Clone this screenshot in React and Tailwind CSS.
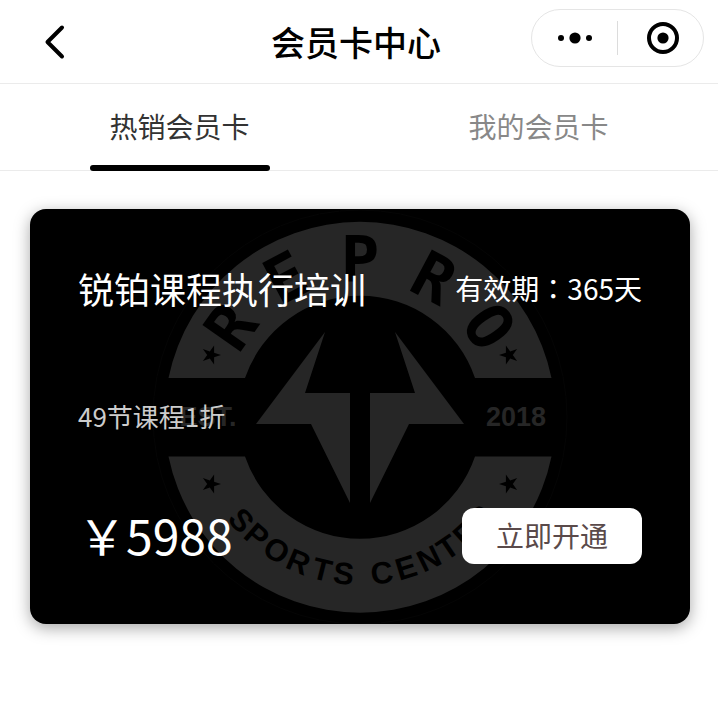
import { useState } from 'react'

const TABS = [
  { key: 'hot', label: '热销会员卡' },
  { key: 'mine', label: '我的会员卡' },
]

const CARDS = [
  { id: 1, name: '锐铂课程执行培训', days: 365, desc: '49节课程1折', price: 5988 },
]

// 徽章上半圈文字：[字符, 角度]
const TOP_LETTERS = [['R', -55], ['E', -28], ['P', 0], ['R', 28], ['O', 55]]

// 徽章下半圈文字
const BOTTOM_LETTERS = [
  ['S', 49], ['P', 41], ['O', 32], ['R', 23], ['T', 14], ['S', 6],
  ['C', -8], ['E', -17], ['N', -26], ['T', -34], ['E', -42], ['R', -50],
]

const STARS = [[-149, -62, 0], [149, -62, 180], [-149, 67, 0], [149, 67, 180]]

function Emblem() {
  return (
    <svg
      viewBox="-208 -208 416 415"
      className="absolute inset-0 h-full w-full"
      fill="#262626"
      fontFamily="'Liberation Sans', Arial, sans-serif"
      fontWeight="700"
      textAnchor="middle"
      aria-hidden="true"
    >
      <circle r="207" fill="none" stroke="#050505" strokeWidth="1" />
      <path d="M-191.5 -39A195.5 195.5 0 0 1 191.5 -39H115A121.5 121.5 0 0 0 -115 -39Z" />
      <path d="M-191.5 39.5A195.5 195.5 0 0 0 191.5 39.5H115A121.5 121.5 0 0 1 -115 39.5Z" />
      <path d="M-35 -85L-104 7H-49L-10 86V-24H-55Z" />
      <path d="M35 -85L104 7H49L10 86V-24H55Z" />
      {STARS.map(([x, y, r]) => (
        <path
          key={`${x},${y}`}
          d="M10 0L3.1 2.2L3.1 9.5L-1.2 3.6L-8.1 5.9L-3.8 0L-8.1 -5.9L-1.2 -3.6L3.1 -9.5L3.1 -2.2Z"
          transform={`translate(${x} ${y}) rotate(${r})`}
          fill="#000"
        />
      ))}
      <g fill="#000" fontSize="64" fontFamily="'DejaVu Sans Mono', monospace">
        {TOP_LETTERS.map(([ch, deg]) => (
          <text key={deg} y="-135" transform={`rotate(${deg})`}>{ch}</text>
        ))}
      </g>
      <g fill="#000" fontSize="31">
        {BOTTOM_LETTERS.map(([ch, deg]) => (
          <text key={deg} y="168" transform={`rotate(${deg})`}>{ch}</text>
        ))}
      </g>
      <text x="-152" y="9" fontSize="27">EST.</text>
      <text x="156" y="9" fontSize="27">2018</text>
    </svg>
  )
}

function Header() {
  return (
    <header className="relative flex h-[84px] items-center justify-between border-b border-[#ebebeb] pr-[14px] pl-9">
      <button aria-label="返回" className="flex h-12 w-10 items-center justify-center">
        <svg width="36" height="36" viewBox="0 0 36 36" fill="none" stroke="#000" strokeWidth="4" strokeLinecap="round" strokeLinejoin="round">
          <path d="M24 3.5L9.5 18L24 32.5" />
        </svg>
      </button>
      <h1 className="absolute inset-x-0 top-[18px] mx-auto w-fit pr-[6px] text-[34px] leading-[48px] font-medium text-black">会员卡中心</h1>
      <div className="mb-[7px] flex h-[58px] w-[173px] items-center rounded-full border border-[#e5e5e5]">
        <button aria-label="更多" className="flex h-full w-[85px] items-center justify-center">
          <svg width="36" height="12" viewBox="0 0 36 12">
            <circle cx="4" cy="6" r="3" />
            <circle cx="18" cy="6" r="5.6" />
            <circle cx="32" cy="6" r="3" />
          </svg>
        </button>
        <span className="h-[34px] w-px bg-[#dcdcdc]" />
        <button aria-label="关闭" className="flex h-full flex-1 items-center justify-center pl-1">
          <svg width="32" height="32" viewBox="0 0 32 32">
            <circle cx="16" cy="16" r="14" fill="none" stroke="#000" strokeWidth="4" />
            <circle cx="16" cy="16" r="5.6" />
          </svg>
        </button>
      </div>
    </header>
  )
}

function MemberCard({ card }) {
  return (
    <article className="relative overflow-hidden rounded-2xl bg-black text-white shadow-[0_4px_16px_rgba(0,0,0,0.35)]">
      <Emblem />
      <div className="relative px-12 pt-[55px] pb-[60px]">
        <div className="flex h-12 items-center justify-between">
          <h2 className="text-[36px] leading-[48px]">{card.name}</h2>
          <span className="text-[28px] leading-[40px]">
            有效期<span className="font-['Noto_Sans_CJK_TC',sans-serif]">：</span>{card.days}天
          </span>
        </div>
        <p className="mt-[84px] text-[26px] leading-[40px] text-[#cccccc]">{card.desc}</p>
        <div className="mt-[72px] flex h-14 items-start justify-between">
          <span className="text-[48px] leading-[52px]">￥{card.price}</span>
          <button className="h-14 w-[180px] rounded-xl bg-white pb-[2px] text-[28px] leading-[40px] text-[#5a4a4a]">立即开通</button>
        </div>
      </div>
    </article>
  )
}

export default function App() {
  const [tab, setTab] = useState('hot')

  return (
    <div className="min-h-screen bg-white font-['Noto_Sans_CJK_SC',sans-serif]">
      <Header />

      {/* 标签栏 */}
      <nav className="flex h-[87px] border-b border-[#ebebeb]">
        {TABS.map((t) => (
          <button
            key={t.key}
            onClick={() => setTab(t.key)}
            className={`relative flex-1 pb-[3px] text-[28px] leading-[40px] ${tab === t.key ? 'text-[#333333]' : 'text-[#888888]'}`}
          >
            {t.label}
            {tab === t.key && (
              <span className="absolute inset-x-0 -bottom-px mx-auto h-[6px] w-[180px] rounded-full bg-black" />
            )}
          </button>
        ))}
      </nav>

      {/* 会员卡列表 */}
      <main className="flex flex-col gap-8 pt-[38px] pr-7 pb-10 pl-[30px]">
        {tab === 'hot' && CARDS.map((card) => <MemberCard key={card.id} card={card} />)}
      </main>
    </div>
  )
}
